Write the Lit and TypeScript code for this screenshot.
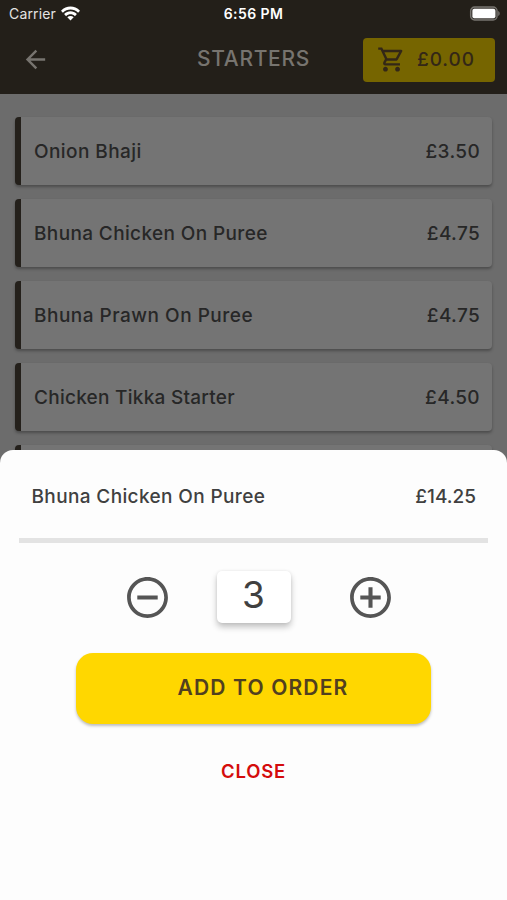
import { LitElement, html, css, svg } from "lit";
import { customElement, state } from "lit/decorators.js";

const items = [
  { name: "Onion Bhaji", price: "£3.50", cls: "n0" },
  { name: "Bhuna Chicken On Puree", price: "£4.75", cls: "n1" },
  { name: "Bhuna Prawn On Puree", price: "£4.75", cls: "n2" },
  { name: "Chicken Tikka Starter", price: "£4.50", cls: "n3" },
  { name: "", price: "", cls: "n4" },
];

const icon = (cls: string, d: string) =>
  html`<svg class=${cls} viewBox="0 0 24 24">${svg`<path d=${d}></path>`}</svg>`;

const BACK = "M20 11H7.83l5.59-5.59L12 4l-8 8 8 8 1.41-1.41L7.83 13H20v-2z";
const CART =
  "M15.55 13c.75 0 1.41-.41 1.75-1.03l3.58-6.49c.37-.66-.11-1.48-.87-1.48H5.21l-.94-2H1v2h2l3.6 7.59-1.35 2.44C4.52 15.37 5.48 17 7 17h12v-2H7l1.1-2h7.45zM6.16 6h12.15l-2.76 5H8.53L6.16 6zM7 18c-1.1 0-1.99.9-1.99 2S5.9 22 7 22s2-.9 2-2-.9-2-2-2zm10 0c-1.1 0-1.99.9-1.99 2s.89 2 1.99 2 2-.9 2-2-.9-2-2-2z";
const RING =
  "M12 2C6.48 2 2 6.48 2 12s4.48 10 10 10 10-4.48 10-10S17.52 2 12 2zm0 18.200c-4.530 0-8.200-3.670-8.200-8.200s3.670-8.200 8.200-8.200 8.200 3.670 8.200 8.200-3.670 8.200-8.200 8.200z";
const MINUS = "M7 11v2h10v-2H7z" + RING;
const PLUS = "M13 7h-2v4H7v2h4v4h2v-4h4v-2h-4V7z" + RING;

@customElement("app-root")
export class AppRoot extends LitElement {
  @state() private qty = 3;

  static styles = css`
    :host {
      display: block;
      position: relative;
      width: 507px;
      height: 900px;
      overflow: hidden;
      background: #6c6c6c;
      color: #272727;
      font-family: Inter, "Liberation Sans", sans-serif;
      font-weight: 400;
    }
    * { box-sizing: border-box; }
    button { font: inherit; border: 0; padding: 0; background: none; color: inherit; }
    svg { display: block; fill: currentColor; }
    span { white-space: nowrap; }
    .head { height: 94px; background: #231f19; }
    .status {
      height: 28px;
      display: grid;
      grid-template-columns: 1fr auto 1fr;
      align-items: center;
      padding: 0 7px 0 9px;
      color: #fff;
      font-size: 14px;
    }
    .carrier { display: flex; align-items: center; gap: 5px; color: #e4e3e2; padding-bottom: 1px; }
    .carrier-name { letter-spacing: 0.15px; }
    .wifi { width: 19px; height: 15px; fill: #fff; }
    .time { font-weight: 600; letter-spacing: 0.400px; padding: 0 2px 1px 0; }
    .battery { width: 31px; height: 15px; justify-self: end; margin-bottom: 2px; }
    .nav { height: 66px; display: grid; grid-template-columns: 1fr auto 1fr; align-items: center; padding: 0 12px 3px 21px; }
    .back { width: 29px; height: 29px; fill: #77746f; }
    .title { font-size: 21px; color: #77746f; font-weight: 500; letter-spacing: 0.7px; padding: 0 9px 2px 0; }
    .basket {
      justify-self: end;
      width: 132px;
      height: 44px;
      display: flex;
      align-items: center;
      gap: 11px;
      padding: 0 0 0 14px;
      border-radius: 4px;
      background: #766500;
      color: #332717;
    }
    .cart { width: 29px; height: 29px; }
    .total { font-size: 19px; font-weight: 500; letter-spacing: 0.900px; }
    .list { padding: 23px 15px 0 15px; display: grid; gap: 14px; }
    .card {
      height: 68px;
      display: flex;
      align-items: center;
      justify-content: space-between;
      padding: 1px 12px 0 13px;
      border-left: 6px solid #24201b;
      border-radius: 4px;
      background: #747474;
      box-shadow: 0 2px 3px rgba(0, 0, 0, 0.3);
      font-size: 19px;
      font-weight: 500;
    }
    .n0 { letter-spacing: 0.430px; }
    .n1 { letter-spacing: 0.370px; }
    .n2 { letter-spacing: 0.500px; }
    .n3 { letter-spacing: 0.260px; }
    .price { letter-spacing: 0.350px; }
    .sheet {
      position: absolute;
      inset: 450px 0 0 0;
      background: #fdfdfd;
      border-radius: 13px 13px 0 0;
      display: flex;
      flex-direction: column;
      align-items: center;
      color: #404040;
    }
    .line {
      width: 469px;
      height: 93px;
      padding: 4px 12px 0 12.500px;
      border-bottom: 5px solid #e3e3e3;
      display: flex;
      align-items: center;
      justify-content: space-between;
      font-size: 19px;
      font-weight: 500;
    }
    .stepper { display: flex; align-items: center; gap: 45px; margin-top: 28px; height: 52px; margin-left: 10px; }
    .round { width: 49px; height: 49px; fill: #555; }
    .qty {
      width: 74px;
      height: 52px;
      margin-right: 10px;
      display: flex;
      justify-content: center;
      padding-bottom: 6px;
      align-items: center;
      border-radius: 5px;
      background: #fff;
      box-shadow: 0 4px 6px rgba(0, 0, 0, 0.24), 0 0 3px rgba(0, 0, 0, 0.07);
      font-size: 37px;
      font-weight: 400;
    }
    .add {
      width: 355px;
      height: 71px;
      margin-top: 30px;
      padding: 0 0 3px 19px;
      border-radius: 17px;
      background: #ffd700;
      box-shadow: 0 2px 3px rgba(0, 0, 0, 0.25);
      color: #51401f;
      font-size: 21px;
      font-weight: 600;
      letter-spacing: 1.150px;
    }
    .close { margin-top: 34px; font-size: 18.500px; line-height: 26px; font-weight: 600; letter-spacing: 0.800px; color: #d40c0c; }
  `;

  render() {
    return html`
      <div class="head">
        <div class="status">
          <div class="carrier">
            <span class="carrier-name">Carrier</span>
            <svg class="wifi" viewBox="0 0 19 15">
              <path d="M0 4.800C5.300-.8 13.700-.8 19 4.800L17.100 6.800C12.800 2.400 6.200 2.400 1.900 6.800ZM3.100 8.100C6.700 4.400 12.300 4.400 15.900 8.100L13.900 10.200C11.400 7.700 7.600 7.700 5.100 10.200ZM6.300 11.300C8.100 9.600 10.900 9.600 12.700 11.300L9.500 14.600Z"></path>
            </svg>
          </div>
          <span class="time">6:56 PM</span>
          <svg class="battery" viewBox="0 0 31 15">
            <rect x="1.600" y="1" width="26.500" height="13" rx="4" fill="#3c3934" stroke="#77746f" stroke-width="1.300"></rect>
            <rect x="3.400" y="2.800" width="23" height="9.400" rx="2" fill="#fff"></rect>
            <path d="M29.200 5c2 .8 2 4.200 0 5z" fill="#77746f"></path>
          </svg>
        </div>
        <div class="nav">
          <button>${icon("back", BACK)}</button>
          <span class="title">STARTERS</span>
          <button class="basket">${icon("cart", CART)}<span class="total">£0.00</span></button>
        </div>
      </div>
      <div class="list">
        ${items.map((i) => html`<div class="card"><span class=${i.cls}>${i.name}</span><span class="price">${i.price}</span></div>`)}
      </div>
      <div class="sheet">
        <div class="line"><span class="n1">Bhuna Chicken On Puree</span><span>£${(this.qty * 4.75).toFixed(2)}</span></div>
        <div class="stepper">
          <button @click=${() => (this.qty = Math.max(1, this.qty - 1))}>${icon("round", MINUS)}</button>
          <div class="qty"><span>${this.qty}</span></div>
          <button @click=${() => this.qty++}>${icon("round", PLUS)}</button>
        </div>
        <button class="add"><span>ADD TO ORDER</span></button>
        <button class="close"><span>CLOSE</span></button>
      </div>
    `;
  }
}
